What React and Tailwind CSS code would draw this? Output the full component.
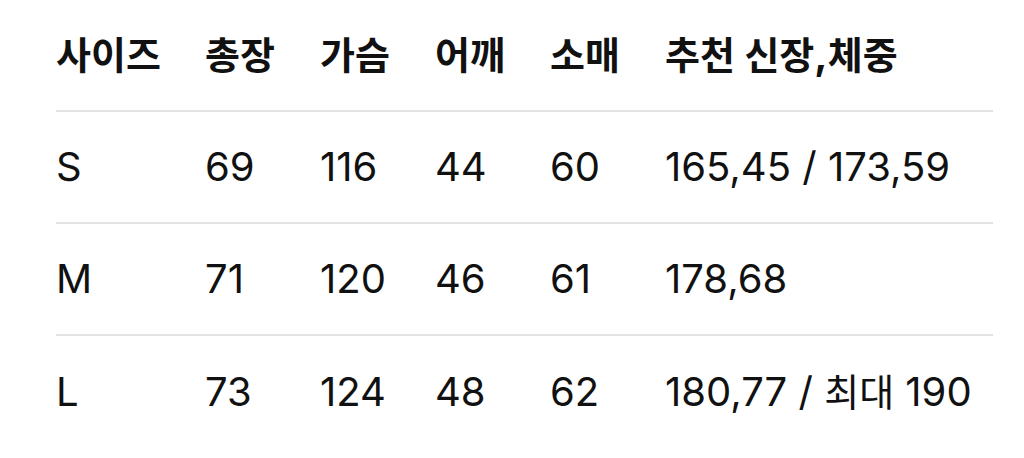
const header = ["사이즈", "총장", "가슴", "어깨", "소매", "추천 신장,체중"]

const rows = [
  ["S", "69", "116", "44", "60", "165,45 / 173,59"],
  ["M", "71", "120", "46", "61", "178,68"],
  ["L", "73", "124", "48", "62", "180,77 / 최대 190"],
]

const widths = ["w-[149px]", "w-[115px]", "w-[115px]", "w-[115px]", "w-[115px]", "flex-1"]

// hangul runs are set a bit smaller than the latin digits
function Cell({ text }) {
  const parts = text.split(/([\uac00-\ud7a3]+)/).filter(Boolean)
  return parts.map((p, i) =>
    /[\uac00-\ud7a3]/.test(p) ? (
      <span key={i} className="text-[38px]">
        {p}
      </span>
    ) : (
      <span key={i}>{p}</span>
    ),
  )
}

function Row({ cells, bold, last }) {
  return (
    <div
      className={
        "flex items-center h-[112px] " +
        (last ? "" : "border-b-2 border-[#e3e3e3]") +
        (bold ? " font-bold" : " font-normal")
      }
    >
      {cells.map((c, i) => (
        <div key={i} className={widths[i] + " whitespace-nowrap"}>
          <Cell text={c} />
        </div>
      ))}
    </div>
  )
}

export default function App() {
  return (
    <div
      className="w-[1024px] h-[458px] bg-white text-[#111] text-[40px] leading-[48px] pl-[56px] pr-[31px]"
      style={{ fontFamily: 'Inter, "Noto Sans CJK KR", sans-serif' }}
    >
      <Row cells={header} bold />
      {rows.map((r, i) => (
        <Row key={r[0]} cells={r} last={i === rows.length - 1} />
      ))}
    </div>
  )
}
